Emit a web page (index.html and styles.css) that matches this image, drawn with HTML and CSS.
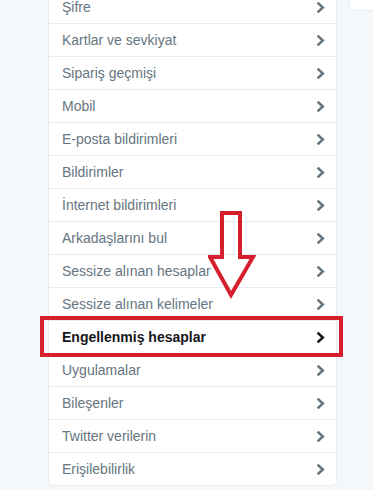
FILE: index.html
```html
<!DOCTYPE html>
<html lang="tr">
<head>
    <meta charset="UTF-8">
    <meta name="viewport" content="width=device-width, initial-scale=1.0">
    <title>Ayarlar</title>
    <link rel="stylesheet" href="styles.css">
</head>
<body>
    <div class="page">
        <div class="settings">
            <ul class="menu">
                <li class="menu-item"><span>Şifre</span><svg class="chev" viewBox="0 0 9 13"><path d="M1.6 1.6 L6.8 6.5 L1.6 11.4"/></svg></li>
                <li class="menu-item"><span>Kartlar ve sevkiyat</span><svg class="chev" viewBox="0 0 9 13"><path d="M1.6 1.6 L6.8 6.5 L1.6 11.4"/></svg></li>
                <li class="menu-item"><span>Sipariş geçmişi</span><svg class="chev" viewBox="0 0 9 13"><path d="M1.6 1.6 L6.8 6.5 L1.6 11.4"/></svg></li>
                <li class="menu-item"><span>Mobil</span><svg class="chev" viewBox="0 0 9 13"><path d="M1.6 1.6 L6.8 6.5 L1.6 11.4"/></svg></li>
                <li class="menu-item"><span>E-posta bildirimleri</span><svg class="chev" viewBox="0 0 9 13"><path d="M1.6 1.6 L6.8 6.5 L1.6 11.4"/></svg></li>
                <li class="menu-item"><span>Bildirimler</span><svg class="chev" viewBox="0 0 9 13"><path d="M1.6 1.6 L6.8 6.5 L1.6 11.4"/></svg></li>
                <li class="menu-item"><span>İnternet bildirimleri</span><svg class="chev" viewBox="0 0 9 13"><path d="M1.6 1.6 L6.8 6.5 L1.6 11.4"/></svg></li>
                <li class="menu-item"><span>Arkadaşlarını bul</span><svg class="chev" viewBox="0 0 9 13"><path d="M1.6 1.6 L6.8 6.5 L1.6 11.4"/></svg></li>
                <li class="menu-item"><span>Sessize alınan hesaplar</span><svg class="chev" viewBox="0 0 9 13"><path d="M1.6 1.6 L6.8 6.5 L1.6 11.4"/></svg></li>
                <li class="menu-item"><span>Sessize alınan kelimeler</span><svg class="chev" viewBox="0 0 9 13"><path d="M1.6 1.6 L6.8 6.5 L1.6 11.4"/></svg></li>
                <li class="menu-item active"><span>Engellenmiş hesaplar</span><svg class="chev" viewBox="0 0 9 13"><path d="M1.6 1.6 L6.8 6.5 L1.6 11.4"/></svg></li>
                <li class="menu-item"><span>Uygulamalar</span><svg class="chev" viewBox="0 0 9 13"><path d="M1.6 1.6 L6.8 6.5 L1.6 11.4"/></svg></li>
                <li class="menu-item"><span>Bileşenler</span><svg class="chev" viewBox="0 0 9 13"><path d="M1.6 1.6 L6.8 6.5 L1.6 11.4"/></svg></li>
                <li class="menu-item"><span>Twitter verilerin</span><svg class="chev" viewBox="0 0 9 13"><path d="M1.6 1.6 L6.8 6.5 L1.6 11.4"/></svg></li>
                <li class="menu-item"><span>Erişilebilirlik</span><svg class="chev" viewBox="0 0 9 13"><path d="M1.6 1.6 L6.8 6.5 L1.6 11.4"/></svg></li>
            </ul>

            <!-- annotation drawn over the menu -->
            <div class="highlight"></div>
            <svg class="arrow" viewBox="0 0 50 90">
                <path d="M14 2 L32 2 L32 46 L45 46 L23 84 L2 46 L14 46 Z"/>
            </svg>
        </div>
        <div class="side-card"></div>
    </div>
</body>
</html>
```

FILE: styles.css
```css
body {
    margin: 0;
    background-color: #f5f8fa;
    font-family: "Liberation Sans", Arial, sans-serif;
    overflow: hidden;
}

.page {
    display: flex;
    gap: 12px;
    padding-left: 48px;
    margin-top: -10px;
}

.settings {
    position: relative;
    flex-shrink: 0;
    width: 289px;
}

.menu {
    list-style: none;
    margin: 0;
    padding: 0;
    background-color: white;
    border: 1px solid #e6ecf0;
    border-radius: 0 0 5px 5px;
}

.menu-item {
    display: flex;
    align-items: center;
    justify-content: space-between;
    height: 32px;
    padding: 0 11px 0 13px;
    border-bottom: 1px solid #e6ecf0;
    font-size: 14px;
    color: #66757f;
}

.menu-item:last-child {
    border-bottom: none;
}

.chev {
    width: 9px;
    height: 13px;
    fill: none;
    stroke: #66757f;
    stroke-width: 2.6;
}

.active {
    font-weight: bold;
    color: #14171a;
}

.active .chev {
    stroke: #14171a;
}

.highlight {
    position: absolute;
    left: -8px;
    top: 326px;
    width: 295px;
    height: 33px;
    border: 4px solid #d51f2d;
}

.arrow {
    position: absolute;
    left: 160px;
    top: 221px;
    width: 50px;
    height: 90px;
    fill: none;
    stroke: #d51f2d;
    stroke-width: 4;
    stroke-linejoin: miter;
}

.side-card {
    flex: 1;
    min-width: 0;
    height: 19px;
    background-color: white;
    border: 1px solid #e6ecf0;
    border-right: none;
    border-radius: 0 0 0 5px;
}
```
